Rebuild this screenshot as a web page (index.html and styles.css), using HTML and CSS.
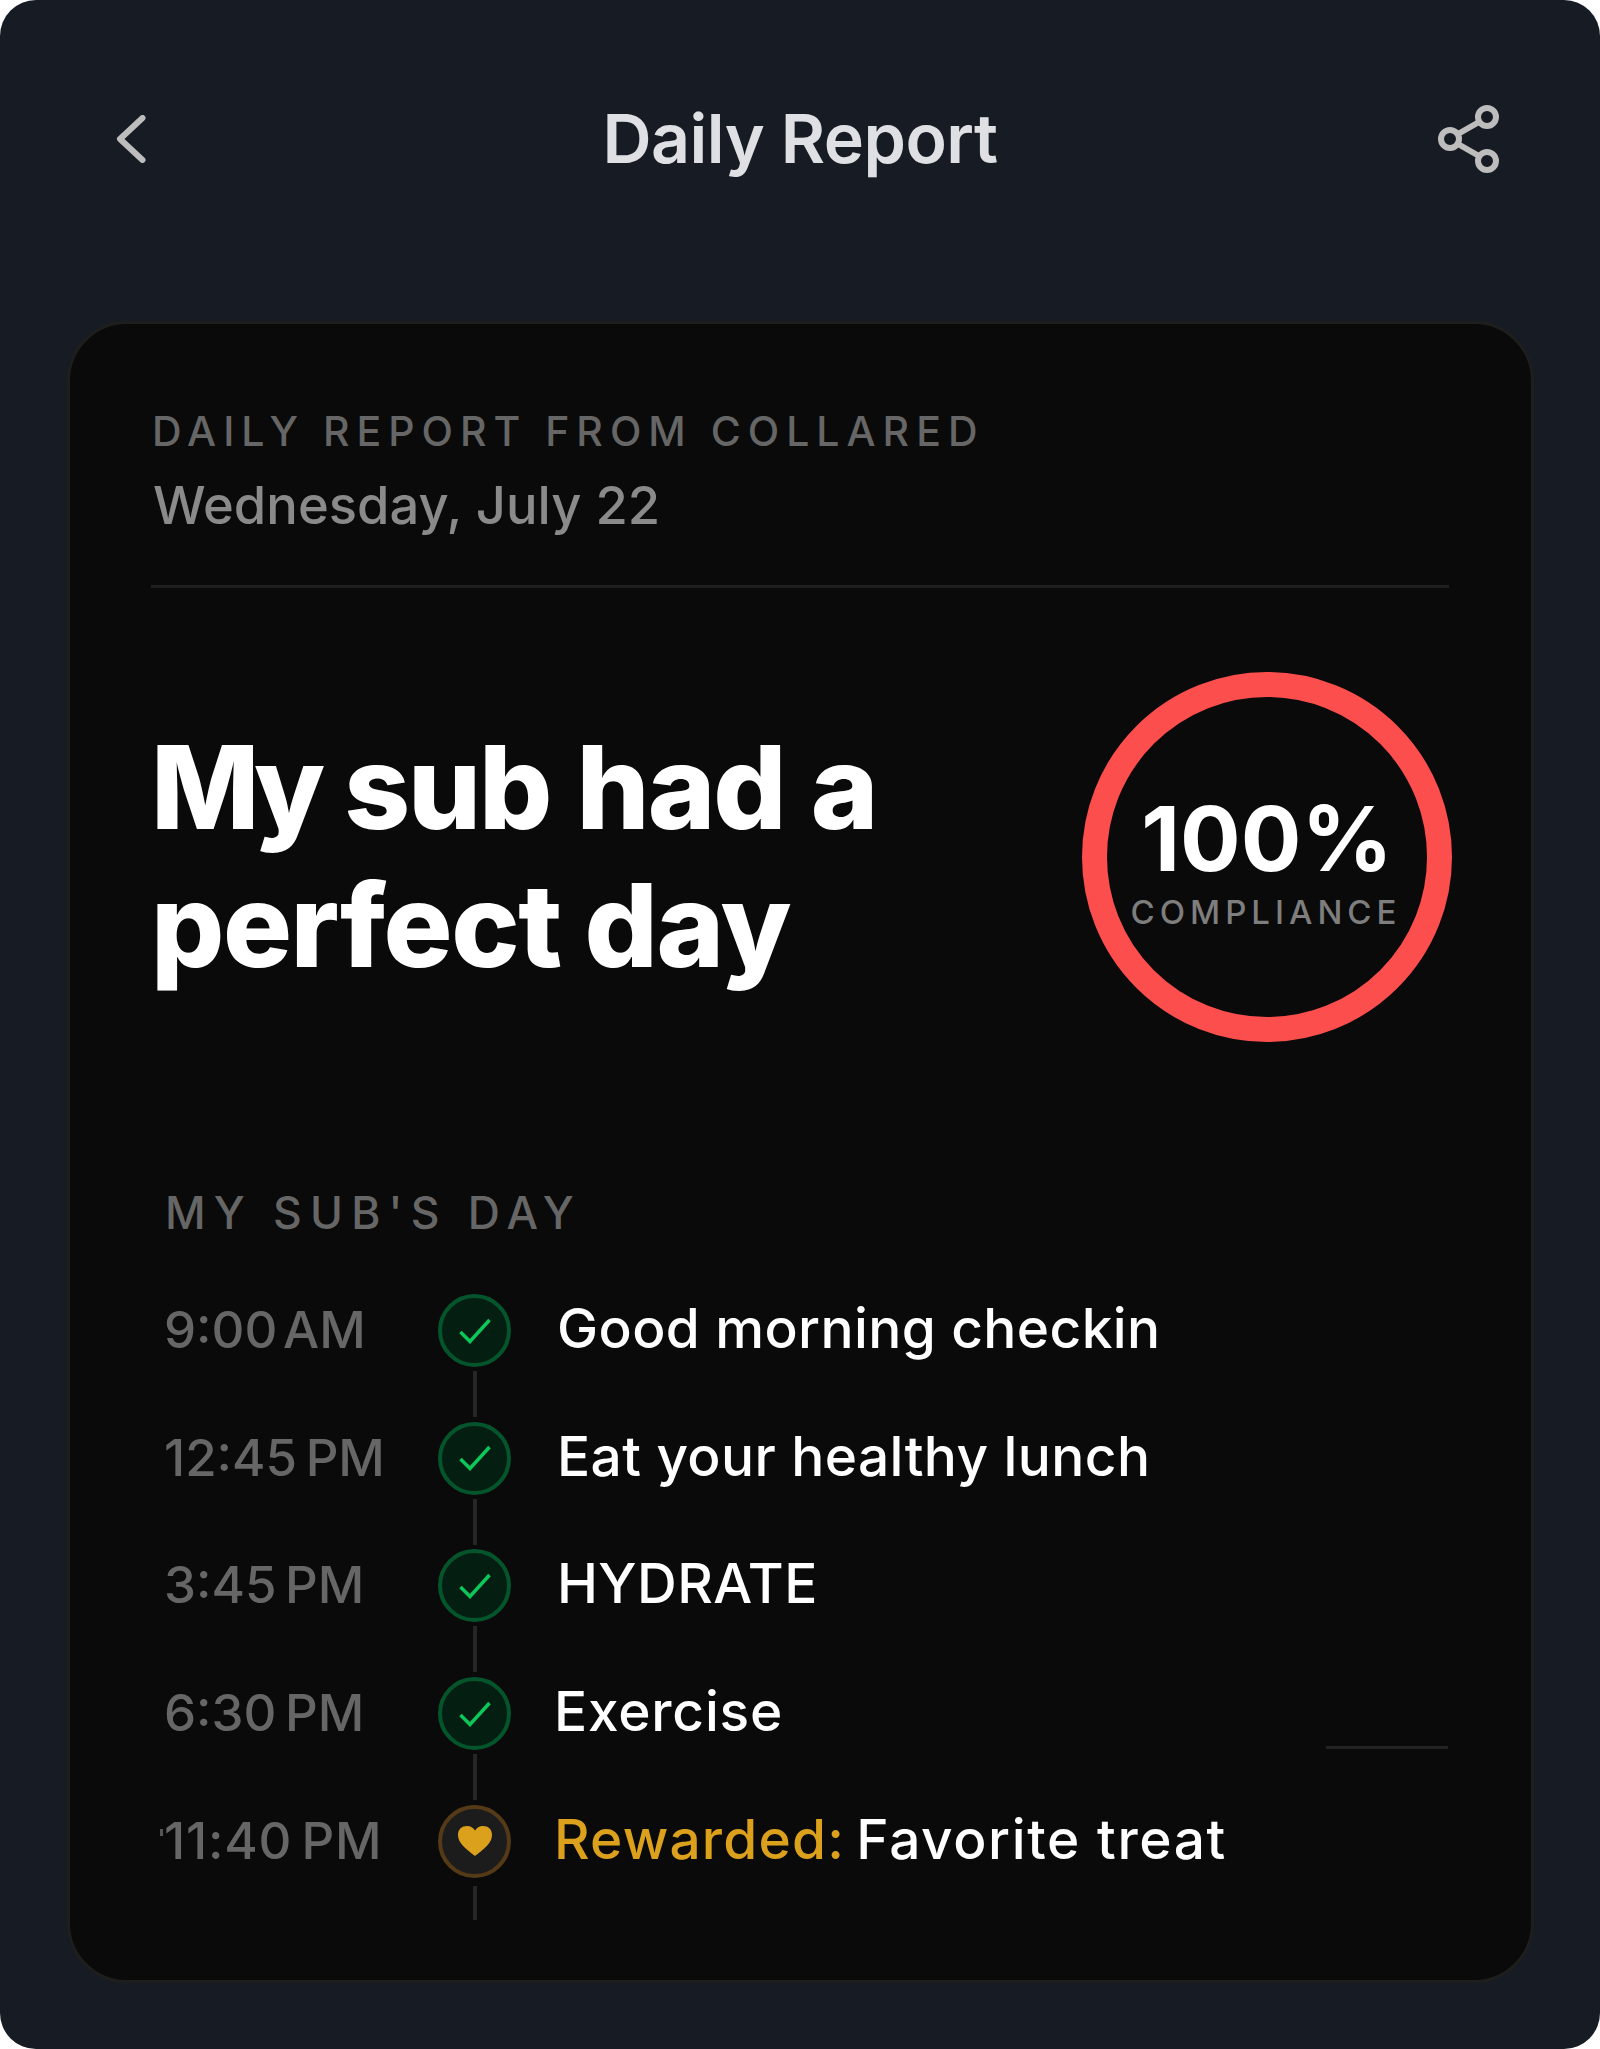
FILE: index.html
```html
<!DOCTYPE html>
<html lang="en">
<head>
<meta charset="utf-8">
<title>Daily Report</title>
<link rel="stylesheet" href="styles.css">
</head>
<body>
<main class="app">
  <header class="topbar">
    <svg class="icon-back" viewBox="0 0 30 48" aria-hidden="true"><path d="M26.500 3 4 24l22.500 21"/></svg>
    <h1 class="title">Daily Report</h1>
    <svg class="icon-share" viewBox="0 0 62 68" aria-hidden="true"><circle cx="49" cy="12" r="9"/><circle cx="12" cy="34" r="9"/><circle cx="49" cy="56" r="9"/><path d="M20 29 41 17M20 39l21 12"/></svg>
  </header>
  <section class="card">
    <div class="card-head">
      <p class="eyebrow">DAILY REPORT FROM COLLARED</p>
      <p class="date">Wednesday, July 22</p>
    </div>
    <div class="hero">
      <h2 class="headline"><span class="headline-kern">My</span> sub had a<br><span class="headline-second">perfect day</span></h2>
      <div class="ring">
        <span class="ring-value">100%</span>
        <span class="ring-label">COMPLIANCE</span>
      </div>
    </div>
    <h3 class="section-label">MY SUB'S DAY</h3>
    <ol class="timeline">
      <li class="row">
        <span class="time time-am">9:00 AM</span>
        <span class="track"><span class="node"><svg class="check" viewBox="0 0 32 26"><path d="M1.500 14l9.500 9.500L30.500 2"/></svg></span><i class="line"></i></span>
        <span class="label">Good morning checkin</span>
      </li>
      <li class="row">
        <span class="time">12:45 PM</span>
        <span class="track"><span class="node"><svg class="check" viewBox="0 0 32 26"><path d="M1.500 14l9.500 9.500L30.500 2"/></svg></span><i class="line"></i></span>
        <span class="label">Eat your healthy lunch</span>
      </li>
      <li class="row">
        <span class="time">3:45 PM</span>
        <span class="track"><span class="node"><svg class="check" viewBox="0 0 32 26"><path d="M1.500 14l9.500 9.500L30.500 2"/></svg></span><i class="line"></i></span>
        <span class="label">HYDRATE</span>
      </li>
      <li class="row">
        <span class="time">6:30 PM</span>
        <span class="track"><span class="node"><svg class="check" viewBox="0 0 32 26"><path d="M1.500 14l9.500 9.500L30.500 2"/></svg></span><i class="line"></i></span>
        <span class="label label-tight label-wide">Exercise</span>
      </li>
      <li class="row">
        <span class="time time-clipped">11:40 PM</span>
        <span class="track"><span class="node node-reward"><svg class="heart" viewBox="0 0 36 32"><path d="M18 31C8 23 1 18 1 10 1 4 5 1 10 1c3.500 0 6.500 1.800 8 4.500C19.500 2.800 22.500 1 26 1c5 0 9 3 9 9 0 8-7 13-17 21z"/></svg></span><i class="line line-end"></i></span>
        <span class="label label-tight label-widest"><b class="accent">Rewarded:</b> Favorite treat</span>
      </li>
    </ol>
    <i class="stub"></i>
  </section>
</main>
</body>
</html>
```
FILE: styles.css
```css
* { box-sizing: border-box; }
html, body { margin: 0; padding: 0; background: #fff; }
body { font-family: Inter, "Liberation Sans", sans-serif; }
h1, h2, h3, p, ol { margin: 0; padding: 0; }
.app {
  width: 1600px;
  height: 2049px;
  background: #171c24;
  border-radius: 36px;
  overflow: hidden;
  padding: 0 66px 0 67px;
}
.topbar {
  height: 321px;
  display: flex;
  align-items: flex-start;
  justify-content: space-between;
  padding: 105px 34px 0 49px;
}
.icon-back { width: 30px; height: 48px; margin-top: 10px; fill: none; stroke: #bdbdbd; stroke-width: 6; stroke-linecap: round; stroke-linejoin: round; }
.icon-share { width: 62px; height: 68px; fill: none; stroke: #bdbdbd; stroke-width: 6; }
.title {
  margin: -1px 0 0 16px;
  font-size: 68px;
  line-height: 68px;
  font-weight: 600;
  color: #dfe0e3;
  letter-spacing: -0.5px;
}
.card {
  position: relative;
  height: 1662px;
  background: #0a0a0a;
  border: 3px solid #1e1e1c;
  border-radius: 60px;
  padding: 85px 82px 0 81px;
}
.card-head { border-bottom: 3px solid #1f1f1f; height: 179px; }
.eyebrow {
  font-size: 41px;
  line-height: 44px;
  font-weight: 500;
  letter-spacing: 7px;
  color: #666;
  padding-left: 1px;
}
.date {
  margin-top: 22px;
  font-size: 52.500px;
  line-height: 60px;
  font-weight: 450;
  color: #8a8a8a;
  padding-left: 2px;
}
.hero {
  height: 600px;
  display: flex;
  justify-content: space-between;
  align-items: center;
  padding-bottom: 62px;
}
.headline {
  font-size: 115px;
  line-height: 138px;
  font-weight: 800;
  color: #fff;
  letter-spacing: -2px;
  word-spacing: 3px;
}
.headline-kern { letter-spacing: -7px; }
.headline-second { letter-spacing: -1.4px; word-spacing: 0; }
.ring {
  width: 370px;
  height: 370px;
  border: 25px solid #fd4e4e;
  border-radius: 50%;
  display: flex;
  flex-direction: column;
  align-items: center;
  justify-content: center;
  flex: none;
  margin-right: -3px;
  padding-top: 9px;
}
.ring-value { font-size: 90px; line-height: 96px; font-weight: 650; color: #fff; }
.ring-label { margin: 5px 0 0 -2px; font-size: 33px; line-height: 40px; font-weight: 500; letter-spacing: 5px; color: #7e7e7e; }
.section-label {
  font-size: 44.500px;
  line-height: 50px;
  font-weight: 500;
  letter-spacing: 8.2px;
  color: #666;
  padding-left: 14px;
}
.timeline { list-style: none; margin-top: 56px; padding-left: 13px; }
.row {
  display: grid;
  grid-template-columns: 228px 73px 1fr;
  column-gap: 46px;
  height: 127.700px;
}
.time { font-size: 51px; line-height: 71px; font-weight: 450; color: #666; word-spacing: -5px; white-space: nowrap; }
.time-am { word-spacing: -8px; }
.time-clipped { position: relative; letter-spacing: 0.8px; }
.time-clipped::before {
  content: "";
  position: absolute;
  left: -4px;
  top: 24px;
  width: 3px;
  height: 7px;
  background: #555;
}
.track { display: flex; flex-direction: column; align-items: center; }
.node {
  width: 73px;
  height: 73px;
  flex: none;
  border-radius: 50%;
  background: #051e12;
  border: 4px solid #04552b;
  display: flex;
  align-items: center;
  justify-content: center;
}
.node-reward { background: #1c1c1c; border-color: #553a17; }
.check { width: 32px; height: 26px; fill: none; stroke: #0dc75a; stroke-width: 3.500; }
.heart { width: 36px; height: 32px; fill: #dba11c; }
.line { display: block; width: 4px; height: 46px; margin-top: 4px; background: #262626; }
.line-end { height: 34px; margin-top: 8px; }
.label { font-size: 55px; line-height: 68px; font-weight: 550; color: #fff; letter-spacing: 0.4px; white-space: nowrap; }
.label-tight { margin-left: -3px; }
.label-wide { letter-spacing: 0.8px; }
.label-widest { letter-spacing: 1.6px; }
.accent { margin-right: -5px; font-weight: 550; letter-spacing: 1.200px; color: #dba11c; }
.stub {
  position: absolute;
  left: 1256px;
  top: 1422px;
  width: 122px;
  height: 3px;
  background: #232323;
}
```
